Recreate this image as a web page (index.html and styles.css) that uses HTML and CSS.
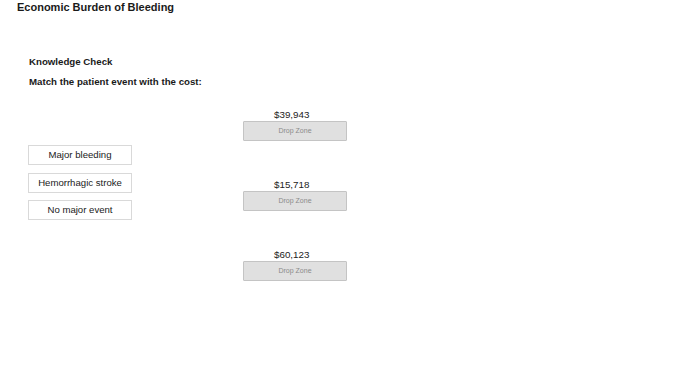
FILE: index.html
```html
<!DOCTYPE html>
<html lang="en">
<head>
<meta charset="utf-8">
<title>Economic Burden of Bleeding</title>
<link rel="stylesheet" href="styles.css">
</head>
<body>
<h1 class="page-title">Economic Burden of Bleeding</h1>
<section class="quiz">
  <h2 class="quiz-heading">Knowledge Check</h2>
  <p class="quiz-prompt">Match the patient event with the cost:</p>
  <div class="board">
    <div class="options">
      <div class="option">Major bleeding</div>
      <div class="option">Hemorrhagic stroke</div>
      <div class="option">No major event</div>
    </div>
    <div class="targets">
      <div class="target">
        <div class="cost">$39,943</div>
        <div class="dropzone">Drop Zone</div>
      </div>
      <div class="target">
        <div class="cost">$15,718</div>
        <div class="dropzone">Drop Zone</div>
      </div>
      <div class="target">
        <div class="cost">$60,123</div>
        <div class="dropzone">Drop Zone</div>
      </div>
    </div>
  </div>
</section>
</body>
</html>
```
FILE: styles.css
```css
* { box-sizing: border-box; }
html, body {
  margin: 0;
  padding: 0;
  background: #ffffff;
  color: #1a1a1a;
  font-family: "Liberation Sans", Arial, sans-serif;
}
.page-title {
  margin: 0;
  padding-left: 17px;
  font-size: 11px;
  line-height: 15px;
  font-weight: bold;
}
.quiz {
  padding-left: 28px;
  padding-top: 41px;
}
.quiz-heading {
  margin: 0;
  padding-left: 1px;
  font-size: 9.7px;
  line-height: 12px;
  font-weight: bold;
}
.quiz-prompt {
  margin: 8px 0 0;
  padding-left: 1px;
  font-size: 9.7px;
  line-height: 12px;
  font-weight: bold;
}
.board {
  display: flex;
  align-items: flex-start;
  gap: 111px;
  margin-top: 20px;
}
.options {
  display: flex;
  flex-direction: column;
  gap: 7.5px;
  margin-top: 37px;
}
.option {
  width: 104px;
  height: 20px;
  border: 1px solid #d9d9d9;
  background: #fff;
  font-size: 9.6px;
  line-height: 18px;
  text-align: center;
  color: #222;
}
.targets {
  display: flex;
  flex-direction: column;
  gap: 37px;
}
.target {
  width: 104px;
}
.cost {
  padding-left: 31px;
  font-size: 9.8px;
  line-height: 13px;
  color: #222;
}
.dropzone {
  height: 20px;
  border: 1px solid #c4c4c4;
  border-radius: 1px;
  background: #e0e0e0;
  font-size: 7px;
  line-height: 18px;
  text-align: center;
  color: #8a8a8a;
}
```
